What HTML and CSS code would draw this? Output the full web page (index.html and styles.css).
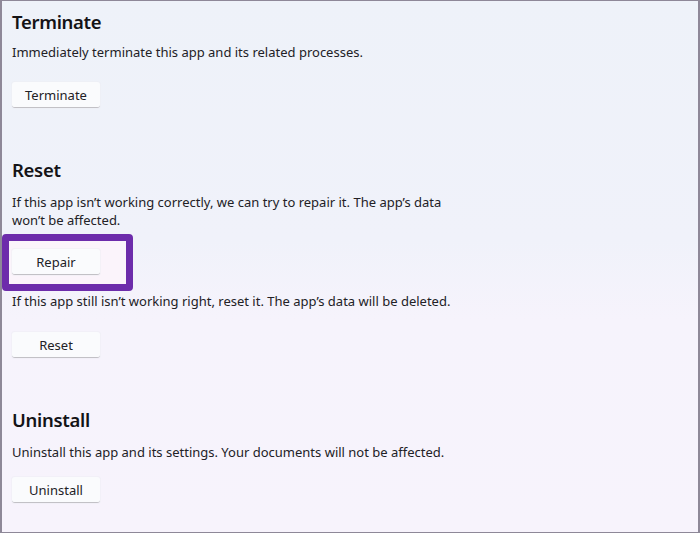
FILE: index.html
```html
<!DOCTYPE html>
<html lang="en">
<head>
<meta charset="utf-8">
<title>App settings</title>
<link rel="stylesheet" href="styles.css">
</head>
<body>
<div class="frame">
  <section class="section section--first">
    <h2 class="title">Terminate</h2>
    <p class="desc desc--first">Immediately terminate this app and its related processes.</p>
    <button class="btn btn--first">Terminate</button>
  </section>

  <section class="section">
    <h2 class="title">Reset</h2>
    <p class="desc">If this app isn’t working correctly, we can try to repair it. The app’s data<br>won’t be affected.</p>
    <div class="highlight-wrap">
      <button class="btn btn--repair">Repair</button>
      <span class="highlight"></span>
    </div>
    <p class="desc desc--after">If this app still isn’t working right, reset it. The app’s data will be deleted.</p>
    <button class="btn">Reset</button>
  </section>

  <section class="section">
    <h2 class="title">Uninstall</h2>
    <p class="desc">Uninstall this app and its settings. Your documents will not be affected.</p>
    <button class="btn btn--tight">Uninstall</button>
  </section>
</div>
</body>
</html>
```

FILE: styles.css
```css
html, body {
  margin: 0;
  padding: 0;
}

body {
  width: 700px;
  height: 533px;
  overflow: hidden;
  font-family: "Noto Sans", "Open Sans", "DejaVu Sans", sans-serif;
  color: #1c1b1f;
}

.frame {
  box-sizing: border-box;
  width: 700px;
  height: 533px;
  border: 1px solid #8e8898;
  border-left-width: 2px;
  border-right-width: 2px;
  background: linear-gradient(180deg, #eef2f9 0%, #f0f2fa 45%, #f6f3fc 60%, #f7f3fc 100%);
  padding: 9px 0 0 10px;
}

.section {
  display: flex;
  flex-direction: column;
  align-items: flex-start;
  margin-top: 50px;
}

.section--first {
  margin-top: 0;
}

.title {
  margin: 0;
  font-size: 18.5px;
  line-height: 24px;
  font-weight: 600;
  color: #141316;
  letter-spacing: -0.3px;
}

.desc {
  margin: 11px 0 0 0;
  font-size: 13px;
  line-height: 18px;
  color: #222126;
}

.desc--first {
  margin-top: 9px;
}

.desc--after {
  margin-top: 17px;
}

.btn {
  box-sizing: border-box;
  margin-top: 22px;
  width: 88px;
  height: 26px;
  padding: 0;
  border: none;
  border-bottom: 1px solid #c2c1c6;
  border-radius: 3px;
  background: #fafbfd;
  box-shadow: 0 0 0 1px rgba(238, 238, 243, 0.5);
  font-family: inherit;
  font-size: 13px;
  color: #222126;
  line-height: 24px;
  text-align: center;
}

.btn--first {
  margin-top: 21px;
}

.btn--tight {
  margin-top: 16px;
}

.highlight-wrap {
  position: relative;
  margin-top: 20px;
}

.highlight-wrap .btn {
  margin-top: 0;
  position: relative;
  z-index: 1;
}

.highlight {
  position: absolute;
  left: -10px;
  top: -15px;
  right: -33px;
  bottom: -16px;
  border: 7px solid #6d2cab;
  border-radius: 4px;
  background: #fbf4fb;
}
```
